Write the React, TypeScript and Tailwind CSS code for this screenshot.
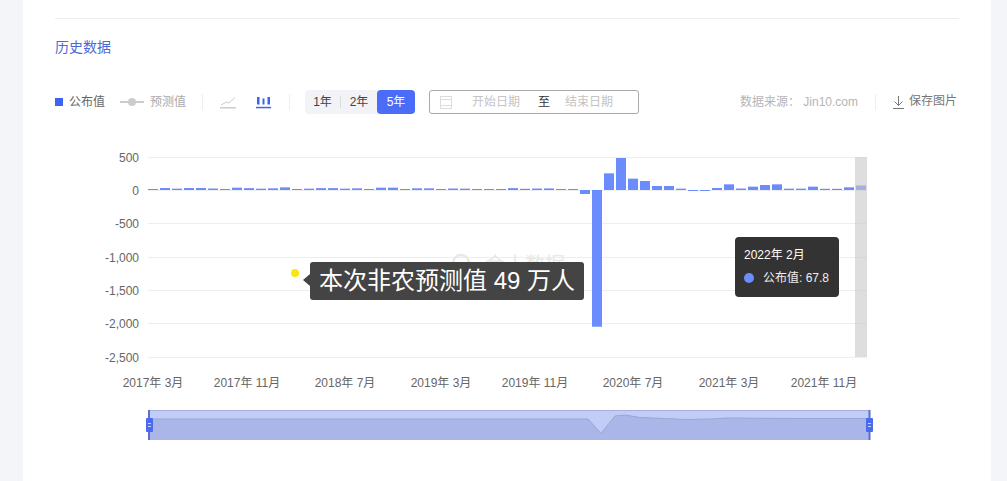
const VALUES = [
  15, 30, 20, 30, 30, 22, 6, 35, 28, 20, 25, 40, 12, 20, 28, 28, 20, 25, 15, 35,
  35, 6, 25, 25, 8, 22, 20, 15, 15, 15, 28, 18, 22, 24, 10, 8,
  -60, -2050, 250, 480, 170, 135, 60, 60, 20, -15, -5, 30, 85, 22, 50, 75, 85, 20, 20, 50, 18, 18, 40, 67.8,
]

const Y_TICKS = [
  { label: "500", y: 157 },
  { label: "0", y: 190 },
  { label: "-500", y: 223 },
  { label: "-1,000", y: 257 },
  { label: "-1,500", y: 290 },
  { label: "-2,000", y: 323 },
  { label: "-2,500", y: 357 },
]

const X_LABELS = [
  { label: "2017年 3月", x: 153 },
  { label: "2017年 11月", x: 247 },
  { label: "2018年 7月", x: 345 },
  { label: "2019年 3月", x: 441 },
  { label: "2019年 11月", x: 535 },
  { label: "2020年 7月", x: 633 },
  { label: "2021年 3月", x: 729 },
  { label: "2021年 11月", x: 824 },
]

const ZERO_Y = 190
const SCALE = 0.0667
const STEP = 12

const SLIDER_LINE =
  "149,419 588,419 601,433.5 615,416 625,415 640,417.5 687,419.5 710,419 727,418 793,418.5 869,418.5"

function Chart() {
  return (
    <div className="relative mt-[26px] h-[320px] w-[905px]">
      <svg viewBox="55 140 905 320" className="block h-[320px] w-[905px]">
        {/* Grid */}
        {Y_TICKS.map((t) => (
          <g key={t.label}>
            <line x1="148" x2="867" y1={t.y + 0.5} y2={t.y + 0.5} stroke="#eeeeee" />
            <text x="139" y={t.y + 4.5} textAnchor="end" fontSize="12" fill="#666666">
              {t.label}
            </text>
          </g>
        ))}

        {/* Watermark */}
        <circle cx="461" cy="263" r="8" fill="none" stroke="#e8e8e8" strokeWidth="2.5" />
        <text x="485" y="272" fontSize="20" fill="#e8e8e8">
          金十数据
        </text>

        {/* Bars */}
        {VALUES.map((v, i) => {
          const h = Math.max(Math.abs(v) * SCALE, 1)
          return (
            <rect
              key={i}
              x={148 + i * STEP}
              y={v >= 0 ? ZERO_Y - h : ZERO_Y}
              width="10"
              height={h}
              fill="#6b8cff"
            />
          )
        })}

        {/* Hover band */}
        <rect x="855" y="157" width="12" height="200" fill="#c8c8c8" fillOpacity="0.6" />

        {X_LABELS.map((t) => (
          <text key={t.label} x={t.x} y="387" textAnchor="middle" fontSize="12" fill="#666666">
            {t.label}
          </text>
        ))}

        {/* Range slider */}
        <rect x="149" y="410.5" width="720" height="29.5" fill="#c1cdf7" stroke="none" />
        <line x1="149" x2="869" y1="410.5" y2="410.5" stroke="#a7b0dc" />
        <polygon points={`${SLIDER_LINE} 869,440 149,440`} fill="#a9b6e7" />
        <polyline points={SLIDER_LINE} fill="none" stroke="#98a6d8" />
        <line x1="149" x2="149" y1="410" y2="440" stroke="#5a6fd0" strokeWidth="2" />
        <line x1="869.5" x2="869.5" y1="410" y2="440" stroke="#5a6fd0" strokeWidth="2" />
        {[146, 866].map((x) => (
          <g key={x}>
            <rect x={x} y="418" width="7" height="14" rx="1" fill="#4a6af0" />
            <line x1={x + 2} x2={x + 5} y1="423.5" y2="423.5" stroke="#c9d4ff" />
            <line x1={x + 2} x2={x + 5} y1="426.5" y2="426.5" stroke="#c9d4ff" />
          </g>
        ))}
      </svg>

      {/* Forecast note */}
      <div className="absolute left-[236px] top-[129px] size-2 rounded-full bg-[#f7e70c]" />
      <div className="absolute left-[255px] top-[122px] flex h-[38px] w-[274px] items-center justify-center rounded-[3px] bg-[#444444] text-[24px] text-white">
        <span className="absolute -left-[7px] top-[12px] size-0 border-y-[6px] border-r-[7px] border-y-transparent border-r-[#444444]" />
        本次非农预测值 49 万人
      </div>

      {/* Hover tooltip */}
      <div className="absolute left-[680px] top-[97px] h-[60px] w-[104px] rounded-[4px] bg-[#333333] pl-[9px] pt-[10px] text-xs text-[#eeeeee]">
        <div className="leading-[16px] text-white">2022年 2月</div>
        <div className="mt-[7px] flex items-center gap-[9px] leading-[16px]">
          <span className="size-[10px] rounded-full bg-[#6b8cff]" />
          公布值: 67.8
        </div>
      </div>
    </div>
  )
}

function Divider() {
  return <span className="h-4 w-px bg-[#eeeeee]" />
}

function Toolbar() {
  return (
    <div className="mt-[33px] flex h-6 items-center text-xs">
      <span className="size-2 bg-[#3d63f0]" />
      <span className="ml-[6px] text-[#666666]">公布值</span>
      <svg viewBox="0 0 24 10" className="ml-[15px] h-[10px] w-6">
        <line x1="0" x2="24" y1="5" y2="5" stroke="#cccccc" strokeWidth="2" />
        <circle cx="12" cy="5" r="4" fill="#cccccc" />
      </svg>
      <span className="ml-[6px] text-[#aaaaaa]">预测值</span>
      <span className="ml-4 flex items-center">
        <Divider />
      </span>
      <svg viewBox="0 0 16 13" className="ml-[17px] h-[13px] w-4" fill="none" stroke="#cccccc">
        <polyline points="1,9 6.5,6 9,7 15,1.5" />
        <line x1="0" x2="16" y1="11.8" y2="11.8" strokeWidth="1.5" />
      </svg>
      <svg viewBox="0 0 16 13" className="ml-5 h-[13px] w-4" fill="#3d63f0" stroke="none">
        <rect x="1" y="1" width="2.5" height="7.5" />
        <rect x="6.5" y="2.5" width="2" height="6" />
        <rect x="11.5" y="1" width="2.5" height="7.5" />
        <rect x="0" y="10.8" width="15" height="1.5" />
      </svg>
      <span className="ml-[17px] flex items-center">
        <Divider />
      </span>
      <div className="ml-[15px] flex h-6 w-[110px] items-center rounded-[4px] bg-[#f2f3f6] text-[#444444]">
        <span className="flex h-6 w-[35px] items-center justify-center">1年</span>
        <span className="h-3 w-px bg-[#dddddd]" />
        <span className="flex h-6 w-[36px] items-center justify-center">2年</span>
        <span className="flex h-6 w-[38px] items-center justify-center rounded-[4px] bg-[#4a6cf7] text-white">
          5年
        </span>
      </div>
      <div className="ml-[14px] flex h-6 w-[210px] items-center rounded-[3px] border border-[#aaaaaa] pl-[10px]">
        <svg viewBox="0 0 12 13" className="h-[13px] w-3" fill="none" stroke="#dddddd">
          <rect x="0.5" y="0.5" width="11" height="12" />
          <line x1="0" x2="12" y1="3.5" y2="3.5" />
          <line x1="0" x2="12" y1="9.5" y2="9.5" />
        </svg>
        <span className="ml-[20px] text-[#c4c4c4]">开始日期</span>
        <span className="ml-[18px] text-[#333333]">至</span>
        <span className="ml-[15px] text-[#c4c4c4]">结束日期</span>
      </div>
      <span className="ml-auto text-[#b5b5b5]">数据来源： Jin10.com</span>
      <span className="ml-[17px] flex items-center">
        <Divider />
      </span>
      <svg viewBox="0 0 11 13" className="ml-[17px] h-[13px] w-[11px]" fill="none" stroke="#777777">
        <path d="M5.5 0v9.5M1.5 5.5l4 4 4-4M0 12.5h11" />
      </svg>
      <span className="-mt-[3px] ml-[5px] mr-[2px] text-[#777777]">保存图片</span>
    </div>
  )
}

export default function App() {
  return (
    <div className="h-[481px] overflow-hidden bg-[#f4f5f9] pl-[23px] pr-4 font-['Liberation_Sans','Noto_Sans_CJK_SC',sans-serif]">
      <div className="h-full bg-white px-[32px] pt-[18px]">
        <div className="border-t border-[#eeeeee]" />
        <h2 className="mt-[18px] text-sm leading-[20px] text-[#4a6ad8]">历史数据</h2>
        <Toolbar />
        <Chart />
      </div>
    </div>
  )
}
